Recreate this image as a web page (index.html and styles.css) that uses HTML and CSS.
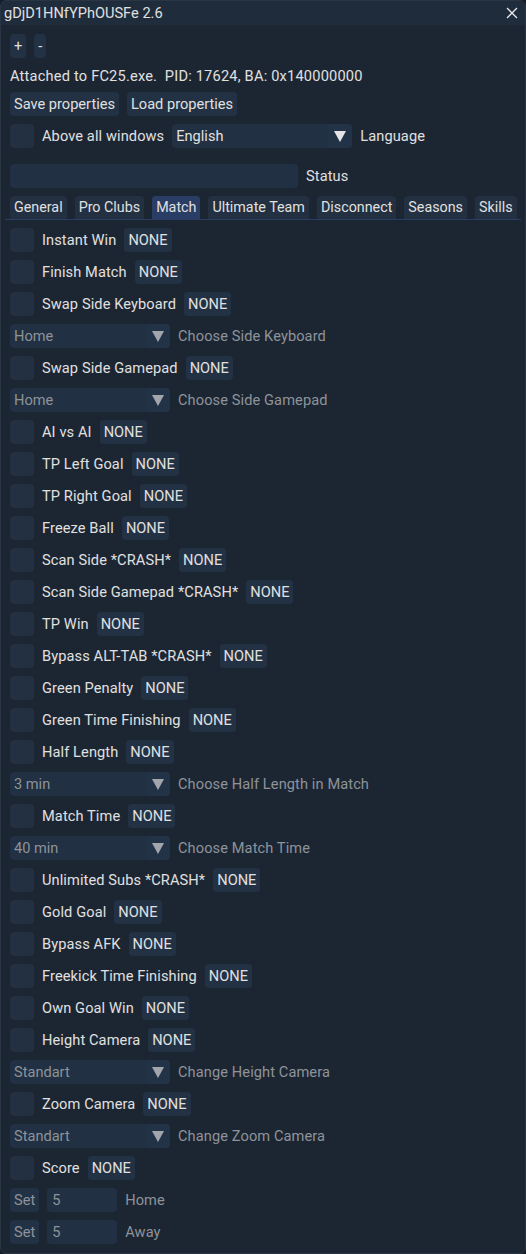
FILE: index.html
```html
<html>
    <head>
        <meta charset="utf-8">
        <title>gDjD1HNfYPhOUSFe 2.6</title>
        <link rel="stylesheet" href="styles.css">
    </head>
    <body class="body">
        <div class="window">
            <div class="titlebar">
                <span>gDjD1HNfYPhOUSFe 2.6</span>
                <svg class="close" width="12" height="12" viewBox="0 0 12 12"><path d="M1 1L11 11M11 1L1 11" stroke="#e8e8e8" stroke-width="1.3"/></svg>
            </div>
            <div class="content">
                <div class="row">
                    <div class="btn">+</div>
                    <div class="btn">-</div>
                </div>
                <div class="text">Attached to FC25.exe.&nbsp; PID: 17624, BA: 0x140000000</div>
                <div class="row">
                    <div class="btn">Save properties</div>
                    <div class="btn">Load properties</div>
                </div>
                <div class="row">
                    <div class="check"></div>
                    <span>Above all windows</span>
                    <div class="combo wide">
                        <div class="combo-val">English</div>
                        <div class="combo-arrow"><i class="tri"></i></div>
                    </div>
                    <span>Language</span>
                </div>
                <div class="row space">
                    <div class="input status"></div>
                    <span>Status</span>
                </div>
                <div class="tabs">
                    <div class="tab">General</div>
                    <div class="tab">Pro Clubs</div>
                    <div class="tab active">Match</div>
                    <div class="tab">Ultimate Team</div>
                    <div class="tab">Disconnect</div>
                    <div class="tab">Seasons</div>
                    <div class="tab">Skills</div>
                </div>

                <div class="row"><div class="check"></div><span>Instant Win</span><div class="btn">NONE</div></div>
                <div class="row"><div class="check"></div><span>Finish Match</span><div class="btn">NONE</div></div>
                <div class="row"><div class="check"></div><span>Swap Side Keyboard</span><div class="btn">NONE</div></div>
                <div class="row dim">
                    <div class="combo"><div class="combo-val">Home</div><div class="combo-arrow"><i class="tri"></i></div></div>
                    <span>Choose Side Keyboard</span>
                </div>
                <div class="row"><div class="check"></div><span>Swap Side Gamepad</span><div class="btn">NONE</div></div>
                <div class="row dim">
                    <div class="combo"><div class="combo-val">Home</div><div class="combo-arrow"><i class="tri"></i></div></div>
                    <span>Choose Side Gamepad</span>
                </div>
                <div class="row"><div class="check"></div><span>AI vs AI</span><div class="btn">NONE</div></div>
                <div class="row"><div class="check"></div><span>TP Left Goal</span><div class="btn">NONE</div></div>
                <div class="row"><div class="check"></div><span>TP Right Goal</span><div class="btn">NONE</div></div>
                <div class="row"><div class="check"></div><span>Freeze Ball</span><div class="btn">NONE</div></div>
                <div class="row"><div class="check"></div><span>Scan Side *CRASH*</span><div class="btn">NONE</div></div>
                <div class="row"><div class="check"></div><span>Scan Side Gamepad *CRASH*</span><div class="btn">NONE</div></div>
                <div class="row"><div class="check"></div><span>TP Win</span><div class="btn">NONE</div></div>
                <div class="row"><div class="check"></div><span>Bypass ALT-TAB *CRASH*</span><div class="btn">NONE</div></div>
                <div class="row"><div class="check"></div><span>Green Penalty</span><div class="btn">NONE</div></div>
                <div class="row"><div class="check"></div><span>Green Time Finishing</span><div class="btn">NONE</div></div>
                <div class="row"><div class="check"></div><span>Half Length</span><div class="btn">NONE</div></div>
                <div class="row dim">
                    <div class="combo"><div class="combo-val">3 min</div><div class="combo-arrow"><i class="tri"></i></div></div>
                    <span>Choose Half Length in Match</span>
                </div>
                <div class="row"><div class="check"></div><span>Match Time</span><div class="btn">NONE</div></div>
                <div class="row dim">
                    <div class="combo"><div class="combo-val">40 min</div><div class="combo-arrow"><i class="tri"></i></div></div>
                    <span>Choose Match Time</span>
                </div>
                <div class="row"><div class="check"></div><span>Unlimited Subs *CRASH*</span><div class="btn">NONE</div></div>
                <div class="row"><div class="check"></div><span>Gold Goal</span><div class="btn">NONE</div></div>
                <div class="row"><div class="check"></div><span>Bypass AFK</span><div class="btn">NONE</div></div>
                <div class="row"><div class="check"></div><span>Freekick Time Finishing</span><div class="btn">NONE</div></div>
                <div class="row"><div class="check"></div><span>Own Goal Win</span><div class="btn">NONE</div></div>
                <div class="row"><div class="check"></div><span>Height Camera</span><div class="btn">NONE</div></div>
                <div class="row dim">
                    <div class="combo"><div class="combo-val">Standart</div><div class="combo-arrow"><i class="tri"></i></div></div>
                    <span>Change Height Camera</span>
                </div>
                <div class="row"><div class="check"></div><span>Zoom Camera</span><div class="btn">NONE</div></div>
                <div class="row dim">
                    <div class="combo"><div class="combo-val">Standart</div><div class="combo-arrow"><i class="tri"></i></div></div>
                    <span>Change Zoom Camera</span>
                </div>
                <div class="row"><div class="check"></div><span>Score</span><div class="btn">NONE</div></div>
                <div class="row dim">
                    <div class="btn">Set</div>
                    <div class="input num">5</div>
                    <span>Home</span>
                </div>
                <div class="row dim">
                    <div class="btn">Set</div>
                    <div class="input num">5</div>
                    <span>Away</span>
                </div>
            </div>
        </div>
    </body>
</html>
```

FILE: styles.css
```css
.body{
    margin:0;
    background:#151c25;
    font-family:Roboto, "Noto Sans", sans-serif;
    font-size:14.6px;
    color:#e0e0e0;
}

.window{
    box-sizing:border-box;
    width:526px;
    height:1254px;
    background:#1c2633;
    border:1px solid #2a3543;
    border-radius:6px;
    overflow:hidden;
}

.titlebar{
    height:24px;
    background:#1f2c3c;
    display:flex;
    align-items:center;
    justify-content:space-between;
    padding:0 7px 0 3px;
}
.close{
    display:block;
}

.content{
    display:flex;
    flex-direction:column;
    gap:8px;
    padding:9px 9px 0 9px;
}

.row{
    display:flex;
    align-items:center;
    gap:8px;
    height:24px;
    white-space:nowrap;
}
.row > span{
    letter-spacing:0.1px;
}
.space{
    margin-top:8px;
}
.text{
    height:18px;
    line-height:20px;
    white-space:nowrap;
    letter-spacing:0.2px;
}
.dim{
    color:#8e939a;
}

.check{
    width:24px;
    height:24px;
    background:#223041;
    border-radius:4px;
}

.btn{
    height:24px;
    line-height:24px;
    padding:0 4px;
    background:#223244;
    border-radius:4px;
}

.combo{
    display:flex;
    width:160px;
    height:24px;
    background:#213042;
    border-radius:4px;
    overflow:hidden;
}
.combo.wide{
    width:180px;
}
.combo-val{
    flex:1;
    line-height:24px;
    padding-left:4px;
}
.combo-arrow{
    width:24px;
    display:flex;
    align-items:center;
    justify-content:center;
    background:#233347;
}
.tri{
    width:0;
    height:0;
    border-left:6px solid transparent;
    border-right:6px solid transparent;
    border-top:11px solid #e4e4e4;
}
.dim .tri{
    border-top-color:#a2a6ac;
}

.input{
    height:24px;
    line-height:24px;
    padding:0 4px;
    background:#213042;
    border-radius:4px;
    box-sizing:border-box;
}
.status{
    width:288px;
}
.num{
    width:70px;
    padding-left:5px;
}

.tabs{
    display:flex;
    gap:8px;
    margin:0 -5px;
    padding:0 5px;
    border-bottom:1px solid #2a3d63;
}
.tab{
    height:23px;
    line-height:23px;
    padding:0 4px;
    font-size:14.3px;
    background:#223041;
    border-radius:4px 4px 0 0;
    white-space:nowrap;
}
.tab.active{
    background:#2a3d65;
}
```
